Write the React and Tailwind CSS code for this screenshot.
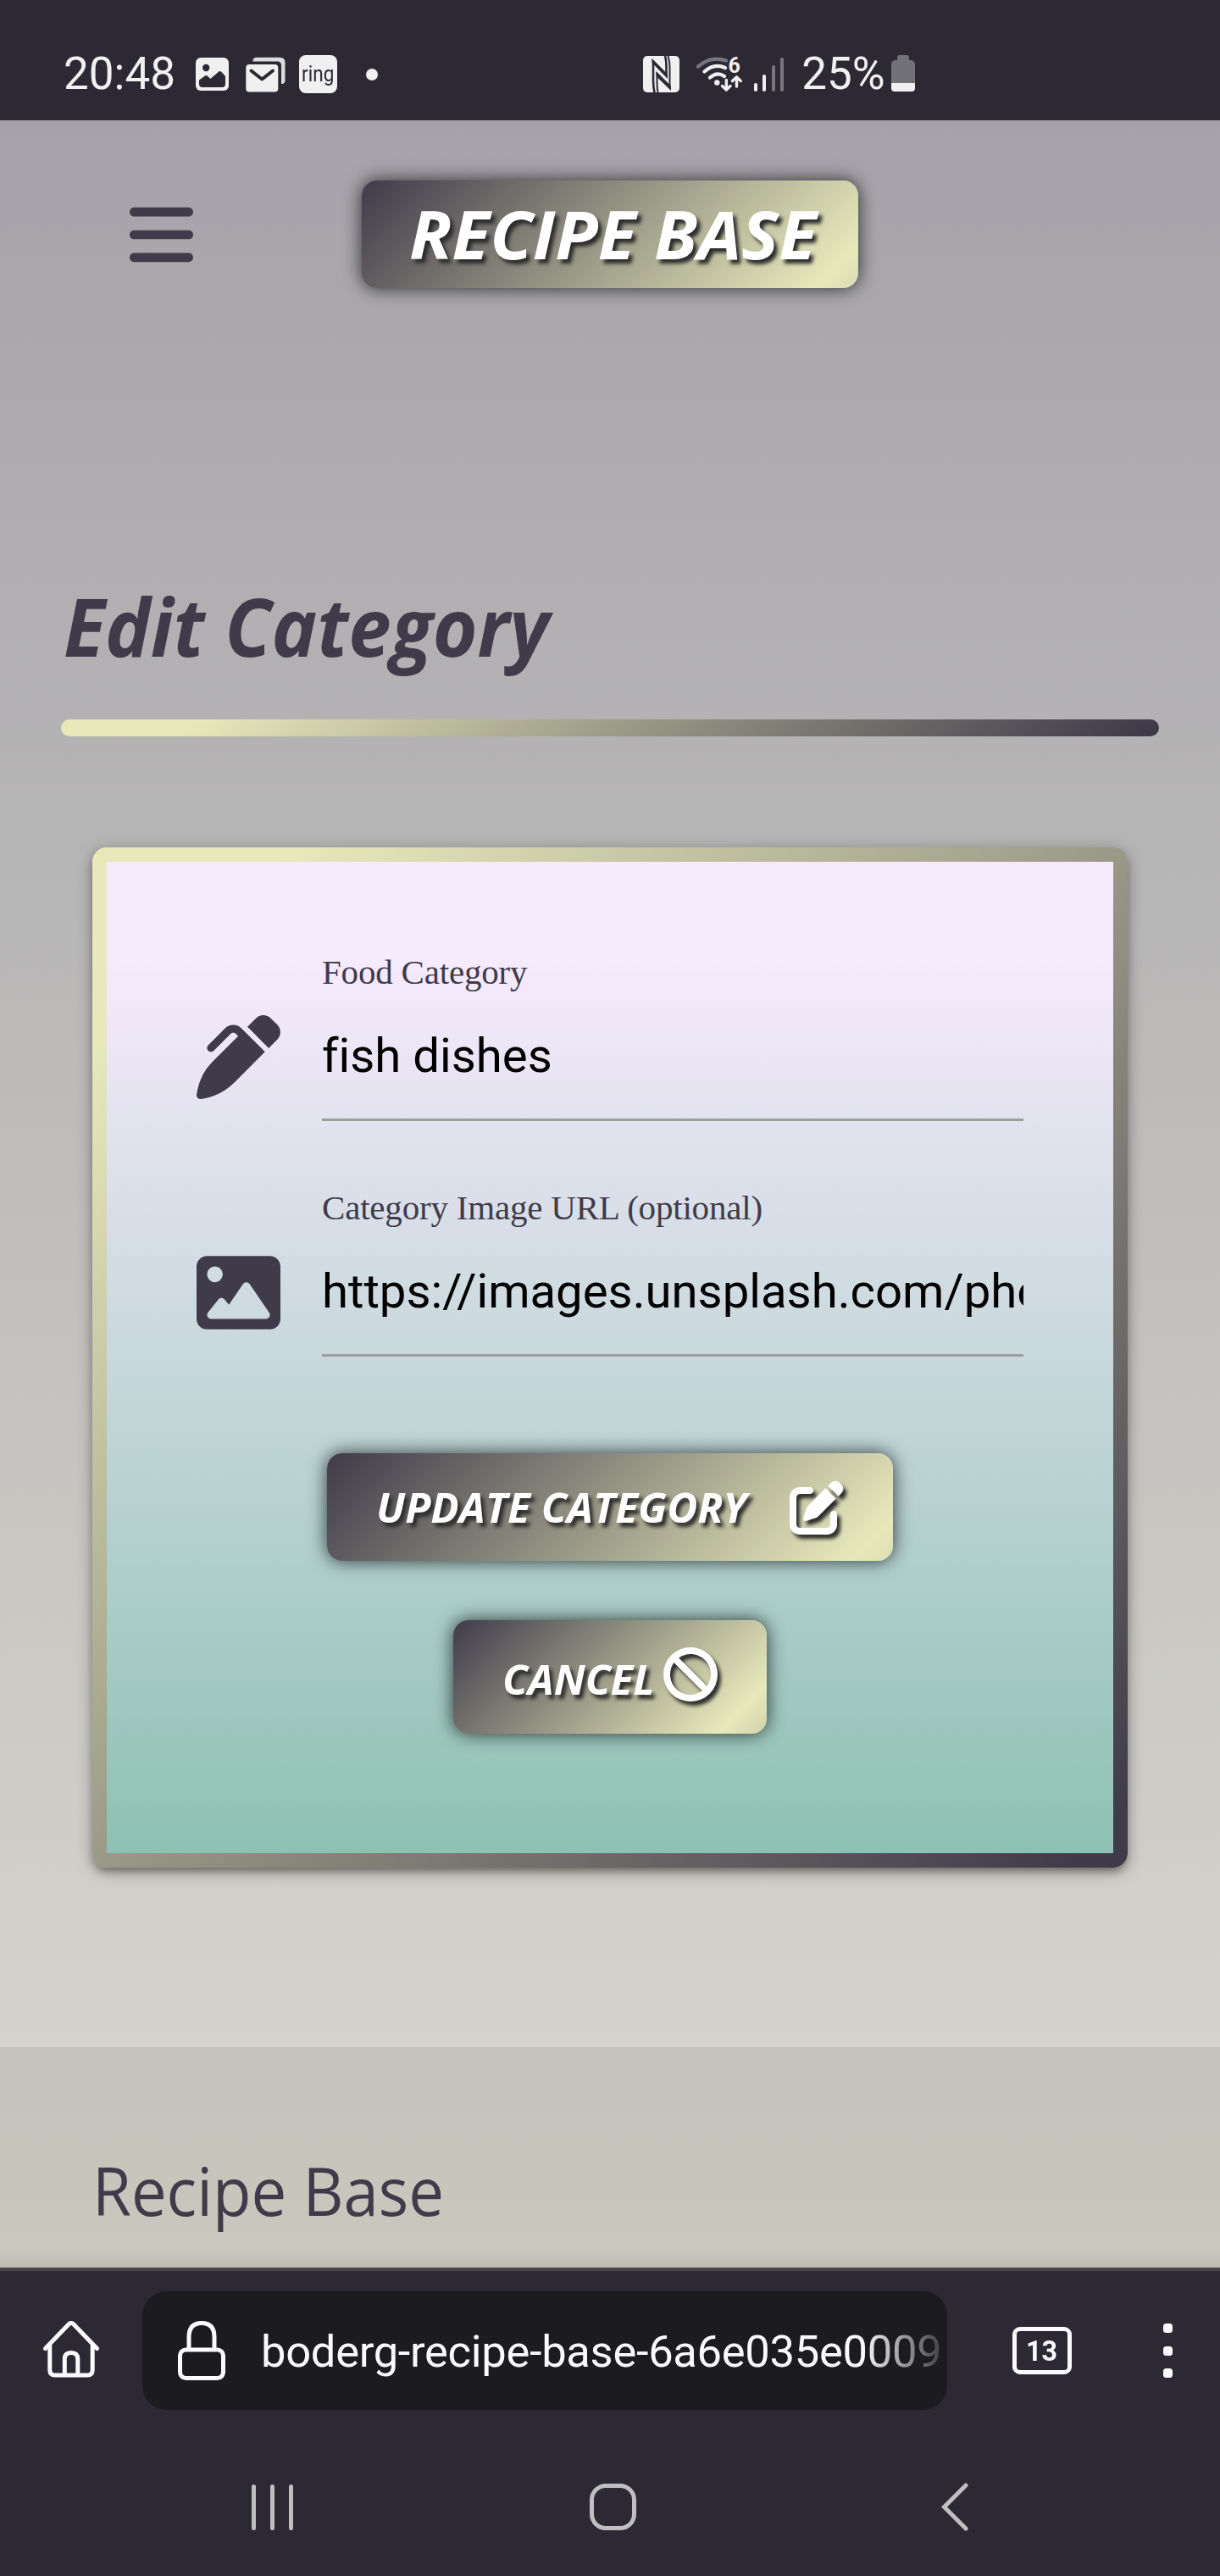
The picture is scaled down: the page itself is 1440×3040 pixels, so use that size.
import React from 'react';
import { FaBan, FaBars, FaImage, FaPenClip, FaPenToSquare } from 'react-icons/fa6';

function PictureIcon() {
  return (
    <svg className="h-[39px] w-[39px]" viewBox="0 0 39 39">
      <rect width="39" height="39" rx="6" fill="#f0f0f0" />
      <circle cx="12.2" cy="12" r="4.2" fill="#2c2934" />
      <path d="M4 26.5 L11 21.5 Q12.5 20.6 14 21.8 L17.3 25 L27.5 16.3 Q28.7 15.4 30 16.5 L35 22 V31 Q35 35 31 35 H8 Q4 35 4 31 Z" fill="#2c2934" />
    </svg>
  );
}

function MailIcon() {
  return (
    <svg className="h-[42px] w-[47px]" viewBox="0 0 47 42">
      <path d="M8.5 5.5 V5 Q8.5 0.8 13 0.8 H40 Q46.5 0.8 46.5 7 V28 Q46.5 32 42.5 32 H42 V10 Q42 5.5 37.500 5.500 Z" fill="#dcdcde" />
      <rect x="0.300" y="9" width="38" height="32.500" rx="4" fill="#f0f0f0" />
      <path d="M6.500 16.500 L19.300 26.500 L32 16.500" fill="none" stroke="#2c2934" strokeWidth="4" strokeLinecap="round" strokeLinejoin="round" />
    </svg>
  );
}

function NfcIcon() {
  return (
    <svg className="h-[43px] w-[43px]" viewBox="0 0 43 43">
      <rect width="43" height="43" rx="5" fill="#f0f0f0" />
      <path d="M13.500 43 Q12 37 12 29 V7 L27.500 23 V14 Q27.500 5 26 0" fill="none" stroke="#2c2934" strokeWidth="2.600" />
      <path d="M29.500 0 Q31.500 6 31.500 14 V36.500 L16.500 21.500 V29 Q16.500 38 17.500 43" fill="none" stroke="#2c2934" strokeWidth="2" />
      <path d="M10.500 3 L29 21.500 V27 L10.500 8 Z" fill="#2c2934" />
      <path d="M15.500 18 L33 35.500 V41 L15.500 24 Z" fill="#2c2934" />
    </svg>
  );
}

function WifiIcon() {
  return (
    <svg className="h-[42px] w-[54px] overflow-visible" viewBox="0 0 54 42">
      <g fill="none" stroke="#f0f0f0" strokeWidth="4.200" strokeLinecap="round">
        <path d="M2 11.500 Q17 -1.500 35 4.500" stroke="#77767c" />
        <path d="M9.500 17.500 Q21 7 34 13" />
        <path d="M16 24.500 Q24.500 17 33 23" />
        <path d="M35.300 27.500 V38 M30.500 34.500 L35.300 39 L40 34.500" strokeWidth="3.400" />
        <path d="M47.500 35 V25 M42.500 28.500 L47.500 24 L52.300 28.500" strokeWidth="3.400" />
      </g>
      <circle cx="24.300" cy="30.500" r="3.200" fill="#f0f0f0" />
      <text x="37.500" y="18.500" fill="#f0f0f0" fontFamily="Roboto, sans-serif" fontWeight="700" fontSize="25">6</text>
    </svg>
  );
}

function StatusBar() {
  return (
    <div className="flex h-[142px] items-center bg-[#2c2934] pt-[33px] text-[53px] leading-none text-[#f0f0f0]">
      <span className="ml-[75px] w-[156px]">20:48</span>
      <PictureIcon />
      <div className="ml-[20px]"><MailIcon /></div>
      <div className="ml-[16px] flex h-[45px] w-[45px] items-center justify-center rounded-[8px] bg-[#f0f0f0] pb-px text-[25px] text-[#2c2934]"><span className="scale-x-90">ring</span></div>
      <div className="ml-[34px] h-[14px] w-[14px] rounded-full bg-[#f0f0f0]" />
      <div className="ml-[313px]"><NfcIcon /></div>
      <div className="ml-[20px]"><WifiIcon /></div>
      <div className="ml-[14px] flex h-[40px] items-end gap-[6.400px]">
        <i className="h-[10px] w-[4px] rounded-full bg-[#f0f0f0]" />
        <i className="h-[20px] w-[4px] rounded-full bg-[#f0f0f0]" />
        <i className="h-[31px] w-[4px] rounded-full bg-[#77767c]" />
        <i className="h-[40px] w-[4px] rounded-full bg-[#77767c]" />
      </div>
      <span className="ml-[21px] w-[106px]">25%</span>
      <div className="-mt-[2px] flex flex-col items-center">
        <div className="h-[6px] w-[14px] rounded-t-[3px] bg-[#727177]" />
        <div className="h-[27px] w-[28px] rounded-t-[5px] bg-[#727177]" />
        <div className="h-[10px] w-[28px] rounded-b-[4px] bg-[#f0f0f0]" />
      </div>
    </div>
  );
}

const gradientButton =
  "flex items-center rounded-[18px] bg-[linear-gradient(135deg,#403b4a_0%,#e7e9bb_51%,#403b4a_100%)] bg-[length:200%_auto] font-['Open_Sans',sans-serif] font-bold italic leading-none text-white whitespace-nowrap shadow-[0_0_21px_rgba(0,0,0,0.75)] [text-shadow:4px_5px_4px_#2c2c2c]";

function Field({ icon, label, value }) {
  return (
    <label className="flex">
      <span className="mb-[3px] flex h-[146px] w-[99px] items-center self-end text-[99px] text-[#403b4a]">{icon}</span>
      <span className="ml-[49px] flex min-w-0 flex-1 flex-col">
        <span className="font-['Liberation_Serif',serif] text-[41px] leading-none tracking-[-0.2px] text-[#403b4a]">{label}</span>
        <input
          readOnly
          value={value}
          className="mt-[6px] h-[149px] w-full border-b-[3px] border-[#9e9e9e] bg-transparent pb-[2px] text-[56.300px] text-black outline-none [font-variant-ligatures:none]"
        />
      </span>
    </label>
  );
}

export default function App() {
  return (
    <div className="flex h-[3040px] w-[1440px] flex-col overflow-hidden font-['Roboto',sans-serif]">
      <StatusBar />

      <div className="relative flex h-[2534px] flex-col bg-[linear-gradient(180deg,#a5a3a9_0%,#d9d9cf_100%)]">
        <header className="mt-[71px] flex h-[127px] items-center pl-[153px]">
          <FaBars className="h-[86px] w-[75px] text-[#403b4a]" />
          <div className={`${gradientButton} ml-[199px] h-[127px] w-[586px] pl-[56px] text-[78.400px]`}>
            <span className="origin-left scale-x-[1.055]">RECIPE BASE</span>
          </div>
        </header>

        <main className="flex h-[2076px] flex-col">
          <h1 className="ml-[75px] mt-[351px] origin-left scale-x-[0.95] self-start font-['Open_Sans',sans-serif] text-[95.200px] font-bold italic leading-none text-[#403b4a]">Edit Category</h1>
          <div className="mx-[72px] mt-[63px] h-[20px] shrink-0 rounded-[10px] bg-[linear-gradient(135deg,#e7e9bb_12%,#403b4a_98%)]" />

          <section className="mx-[109px] mt-[131px] h-[1204px] shrink-0 rounded-[17px] bg-[linear-gradient(135deg,#e7e9bb_10%,#403b4a_97%)] p-[17px] shadow-[0_7px_7px_rgba(0,0,0,0.14),0_10px_4px_-7px_rgba(0,0,0,0.12),0_4px_18px_rgba(0,0,0,0.35)]">
            <form className="flex h-full flex-col bg-[linear-gradient(180deg,#f6eafd_10%,#8ec1b3_100%)] px-[106px] pt-[110px]">
              <Field icon={<FaPenClip />} label="Food Category" value="fish dishes" />
              <div className="h-[82px]" />
              <Field icon={<FaImage />} label="Category Image URL (optional)" value="https://images.unsplash.com/photo" />

              <button type="button" className={`${gradientButton} mt-[114px] h-[127px] w-[668px] justify-between self-center pl-[58px] pr-[58px] text-[48px]`}>
                <span className="origin-left scale-x-[1.03]">UPDATE CATEGORY</span>
                <FaPenToSquare className="h-[64px] w-[64px] [filter:drop-shadow(4px_5px_2px_#2c2c2c)]" />
              </button>
              <button type="button" className={`${gradientButton} mt-[70px] h-[134px] w-[370px] justify-between self-center pl-[58px] pr-[58px] text-[48px]`}>
                <span className="mt-[6px] origin-left scale-x-[1.02]">CANCEL</span>
                <FaBan className="mb-[6px] h-[64px] w-[64px] [filter:drop-shadow(4px_5px_2px_#2c2c2c)]" />
              </button>
            </form>
          </section>
        </main>

        <footer className="flex-1 bg-black/8 pl-[109px] pt-[130px]">
          <p className="origin-left scale-x-[0.953] font-['Open_Sans',sans-serif] text-[78px] leading-[78px] text-[#403b4a]">Recipe Base</p>
        </footer>
        <div className="absolute inset-x-0 bottom-0 h-[20px] bg-linear-to-b from-transparent to-black/5" />
      </div>

      <div className="h-[364px] border-t-[4px] border-[#46464b] bg-[#2c2934]">
        <div className="flex items-center pt-[24px]">
          <svg className="ml-[50px] h-[70px] w-[68px]" viewBox="50 2739 68 70" fill="none" stroke="#fbfbfe" strokeWidth="5" strokeLinecap="round" strokeLinejoin="round">
            <path d="M53.500 2771.500 L81.500 2742.500 Q84 2740.500 86.500 2742.500 L114.500 2771.500" />
            <path d="M58.800 2768 V2797 Q58.800 2803 64.800 2803 H103.200 Q109.200 2803 109.200 2797 V2768" />
            <path d="M76.300 2802 V2784 Q76.300 2776.500 84 2776.500 Q91.800 2776.500 91.800 2784 V2802" />
          </svg>
          <div className="ml-[50px] flex h-[140px] w-[950px] items-center overflow-hidden rounded-[28px] bg-[#1c1b20]">
            <svg className="ml-[42px] h-[70px] w-[56px] shrink-0" viewBox="0 0 56 70" fill="none" stroke="#fbfbfe" strokeWidth="5">
              <rect x="2.500" y="34" width="51" height="33.500" rx="7" />
              <path d="M13 34 V19 Q13 2.500 28 2.500 Q43 2.500 43 19 V34" />
            </svg>
            <span className="ml-[42px] flex-1 whitespace-nowrap pt-[3px] text-[52.500px] tracking-[-0.300px] text-[#fbfbfe] [mask-image:linear-gradient(90deg,#000_710px,transparent_822px)]">boderg-recipe-base-6a6e035e0009</span>
          </div>
          <div className="ml-[77px] flex h-[56px] w-[70px] items-center justify-center rounded-[9px] border-[5px] border-[#fbfbfe] text-[34px] font-bold leading-none text-[#fbfbfe]">
            <span className="scale-x-95">13</span>
          </div>
          <div className="ml-[108px] flex flex-col gap-[15.500px]">
            <i className="h-[11px] w-[11px] rounded-[3.500px] bg-[#fbfbfe]" />
            <i className="h-[11px] w-[11px] rounded-[3.500px] bg-[#fbfbfe]" />
            <i className="h-[11px] w-[11px] rounded-[3.500px] bg-[#fbfbfe]" />
          </div>
        </div>
        <div className="mt-[86px] flex h-[57px] items-center">
          <div className="ml-[297px] flex gap-[17px]">
            <i className="h-[54px] w-[5px] rounded-full bg-[#bfbfc1]" />
            <i className="h-[54px] w-[5px] rounded-full bg-[#bfbfc1]" />
            <i className="h-[54px] w-[5px] rounded-full bg-[#bfbfc1]" />
          </div>
          <div className="ml-[350px] h-[55px] w-[55px] rounded-[19px] border-[5px] border-[#bfbfc1]" />
          <svg className="ml-[359px] h-[57px] w-[34px]" viewBox="0 0 34 57" fill="none" stroke="#bfbfc1" strokeWidth="5" strokeLinecap="round">
            <path d="M30 3 L4.500 28.500 L30 54" />
          </svg>
        </div>
      </div>
    </div>
  );
}
